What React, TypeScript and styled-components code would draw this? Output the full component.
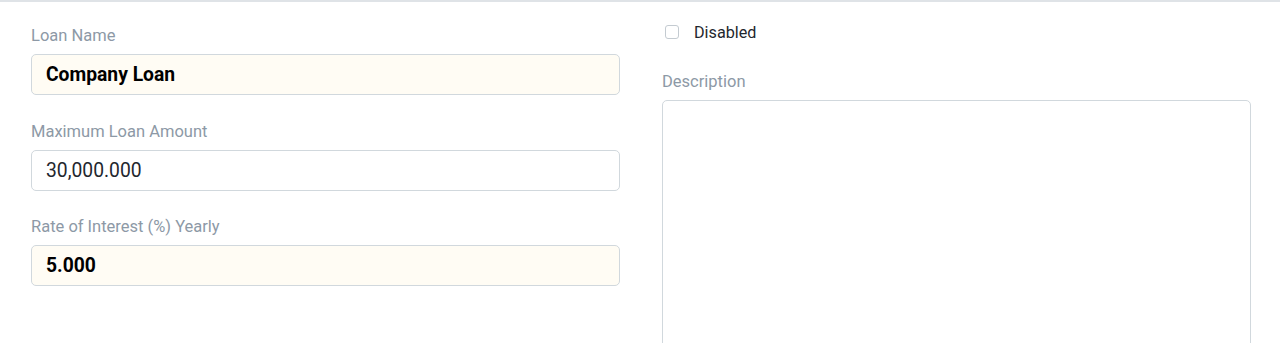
import React from "react";
import styled, { createGlobalStyle } from "styled-components";

const GlobalStyle = createGlobalStyle`
  body {
    margin: 0;
    background: #ffffff;
    font-family: Roboto, "Liberation Sans", sans-serif;
  }
`;

const Page = styled.div`
  border-top: 2px solid #dfe3e7;
  height: 341px;
  overflow: hidden;
  display: grid;
  grid-template-columns: 589px 589px;
  column-gap: 42px;
  padding: 0 29px 0 31px;
`;

const Column = styled.div<{ top: number; spacing: number }>`
  display: flex;
  flex-direction: column;
  padding-top: ${(props) => props.top}px;
  gap: ${(props) => props.spacing}px;
`;

const Field = styled.div`
  display: flex;
  flex-direction: column;
`;

const Label = styled.label`
  font-size: 16.5px;
  line-height: 20px;
  color: #8d99a6;
  margin-bottom: 8px;
`;

const Input = styled.div<{ required?: boolean; bold?: boolean }>`
  height: 41px;
  box-sizing: border-box;
  border: 1px solid #d1d8dd;
  border-radius: 5px;
  background-color: ${(props) => (props.required ? "#fffcf4" : "#ffffff")};
  padding: 0 14px;
  display: flex;
  align-items: center;
  font-size: 19.3px;
  font-weight: ${(props) => (props.bold ? 700 : 400)};
  color: ${(props) => (props.bold ? "#000000" : "#1f272e")};
`;

const CheckRow = styled.div`
  display: flex;
  align-items: center;
  padding-left: 3px;
  height: 16px;
`;

const Box = styled.span`
  width: 14px;
  height: 14px;
  box-sizing: border-box;
  border: 1px solid #c4cbd1;
  border-radius: 3px;
  background: #ffffff;
  margin-right: 15px;
`;

const CheckLabel = styled.span`
  font-size: 16.2px;
  color: #1f272e;
`;

const TextArea = styled.div`
  height: 300px;
  box-sizing: border-box;
  border: 1px solid #d1d8dd;
  border-radius: 5px;
  background: #ffffff;
`;

const fields = [
  { key: "loanName", label: "Loan Name", value: "Company Loan", required: true },
  { key: "maxAmount", label: "Maximum Loan Amount", value: "30,000.000", required: false },
  { key: "rate", label: "Rate of Interest (%) Yearly", value: "5.000", required: true },
];

function App() {
  return (
    <>
      <GlobalStyle />
      <Page>
        <Column top={24} spacing={26.5}>
          {fields.map((f) => (
            <Field key={f.key}>
              <Label>{f.label}</Label>
              <Input required={f.required} bold={f.required}>
                {f.value}
              </Input>
            </Field>
          ))}
        </Column>
        <Column top={22} spacing={32}>
          <CheckRow>
            <Box />
            <CheckLabel>Disabled</CheckLabel>
          </CheckRow>
          <Field>
            <Label>Description</Label>
            <TextArea />
          </Field>
        </Column>
      </Page>
    </>
  );
}

export default App;
